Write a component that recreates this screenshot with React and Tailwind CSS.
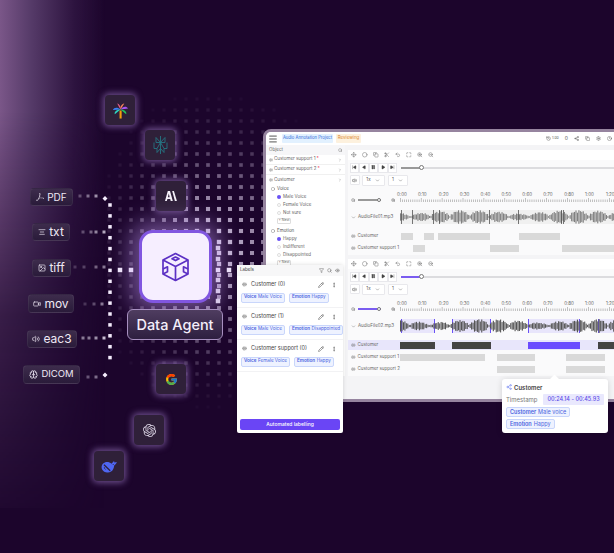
import React from 'react';
import {
  Menu, Search, Clock, Share2, Settings, Eye, Filter, ChevronDown, ChevronRight,
  SkipBack, SkipForward, Play, Pause, StepBack, Volume2, ZoomIn, ZoomOut,
  Copy, Scissors, Undo2, Maximize, Pencil, MoreVertical, AudioLines,
  Video, Image, AlignCenter, Brain, Move, Circle, History,
} from 'lucide-react';
import { FcGoogle } from 'react-icons/fc';
import { SiOpenai, SiAdobeacrobatreader } from 'react-icons/si';

const font = { fontFamily: 'Inter, "Liberation Sans", sans-serif' };

// dotted backdrop behind the agent card
function DotField() {
  const dots = [];
  for (let i = 9; i < 30; i++) {
    for (let j = 8; j < 39; j++) {
      const x = 10 + i * 11;
      const y = j * 11;
      const dx = x < 205 ? (x - 205) / 0.72 : x - 205;
      const d = Math.hypot(dx, y - 250);
      const o = Math.pow(Math.max(0, 1 - d / 175), 1.6) * 1.05;
      if (o < 0.025) continue;
      const s = 3.200 + Math.min(o, 1) * 1.300;
      dots.push(<rect key={`${i}-${j}`} x={x - s / 2} y={y - s / 2} width={s} height={s} fill="#e9dcf6" opacity={Math.min(o, 0.9)} />);
    }
  }
  return (
    <svg className="absolute left-0 top-0" width="614" height="553">
      {dots}
    </svg>
  );
}

// white connector dots from the file chips into the card
function Connectors() {
  const dots = [];
  for (let y = 205; y <= 368; y += 10.9) dots.push([110, y, 3.500, 1]);
  [[80, 196, 0.3], [88, 196, 0.45], [96, 196, 0.6],
   [83, 232, 0.3], [91, 232, 0.4], [96, 232, 0.55], [104, 232, 0.7],
   [75, 267, 0.2], [84, 267, 0.25], [96, 267, 0.4], [104, 267, 0.5],
   [85, 304, 0.2], [94, 304, 0.3], [102, 304, 0.5],
   [83, 338, 0.5], [89, 338, 0.5], [96, 338, 0.6], [104, 338, 0.8],
   [88, 377, 0.35], [96, 377, 0.45]].forEach(([x, y, o]) => dots.push([x, y, 3, o]));
  [[120, 270], [131, 270], [218, 270], [229, 270]].forEach(([x, y]) => dots.push([x, y, 4.500, 1]));
  [248, 259, 280, 291, 301].forEach((y) => dots.push([218, y, 4.500, 0.9]));
  return (
    <svg className="absolute left-0 top-0" width="614" height="553">
      {dots.map(([x, y, s, o], i) => (
        <rect key={i} x={x - s / 2} y={y - s / 2} width={s} height={s} fill="#f4ecfc" opacity={o} />
      ))}
      <path d="M102.500 198.500l2.500-2.500 2.500 2.500-2.500 2.500zM102.500 375l2.500-2.500 2.500 2.500-2.500 2.500z" fill="#f4ecfc" />
    </svg>
  );
}

function Chip({ className, icon, label, text = 'text-[12px]' }) {
  return (
    <div className={`absolute flex items-center justify-center gap-[3px] rounded-[4px] border border-white/5 bg-gradient-to-b from-[#3d2c4c] to-[#2a1b3a] text-[#efe9f5] ${text} ${className}`}>
      {icon}
      <span>{label}</span>
    </div>
  );
}

function Tile({ className, children }) {
  return (
    <div className={`absolute flex h-[30px] w-[30px] items-center justify-center rounded-[4px] bg-[#2f2039] shadow-[0_0_6px_2px_rgba(160,125,200,0.6)] ${className}`}>
      {children}
    </div>
  );
}

function PalmLogo() {
  return (
    <svg width="17" height="17" viewBox="0 0 18 18">
      <rect x="8" y="9" width="2.200" height="8.500" fill="#f59e0b" />
      <path d="M9 8L1 8.500C2 5.500 6 5 9 8z" fill="#3b82f6" />
      <path d="M9 8L3 13C2 10.500 5 8 9 8z" fill="#2dd4bf" />
      <path d="M9 8L5.500 1.500C8 2 9.500 5 9 8z" fill="#ec5f8a" />
      <path d="M9 8L13 1.500C10 2 8.500 5 9 8z" fill="#f9845c" />
      <path d="M9 8L17 7C15 3.500 11 5 9 8z" fill="#a855f7" />
      <path d="M9 8L15 13C16 10.500 13 8 9 8z" fill="#22c55e" />
    </svg>
  );
}

function PerplexityLogo() {
  return (
    <svg width="15" height="18" viewBox="0 0 15 18" fill="none" stroke="#267582" strokeWidth="0.9">
      <path d="M7.500 0v18M7.500 6.500L3 1.500v5h9v-5zM1 6.500v6h3l3.500-6 3.500 6h3v-6M4 12.500v4l3.500-4 3.500 4v-4" />
    </svg>
  );
}

function AnthropicLogo() {
  return (
    <svg width="12" height="10" viewBox="0 0 12 10" fill="#f6f2fa">
      <path d="M2.800 0h2.200l2.800 10H5.700L5.200 8H2.400L1.800 10H0zM2.900 6.300h1.800L3.800 2.600z" />
      <path d="M7.200 0h1.700l3 10H9.900z" />
    </svg>
  );
}

function DeepseekLogo() {
  return (
    <svg width="16" height="14" viewBox="0 0 16 14">
      <path fill="#4f66f2" d="M6 3c1.800 0 3.300.6 4.500 1.700L13 2l.5 1.500L15.800 3c-.5 1.700-1.400 2.800-2.600 3.400C13 9.500 11.700 11.500 10 12.600 8.800 13.400 7.500 13.700 6 13.500 3 13.200.6 11 .6 8.200.6 5.300 3 3 6 3z" />
      <path d="M3 5.800L9.200 11.800" stroke="#2f2039" strokeWidth="1.200" fill="none" />
      <path d="M4.500 10.500c-.8-.6-1.200-1.400-1.200-2.300" stroke="#2f2039" strokeWidth=".8" fill="none" />
      <circle cx="12.200" cy="5.600" r=".5" fill="#2f2039" />
    </svg>
  );
}

function CubeIcon() {
  return (
    <svg width="29" height="30" viewBox="0 0 29 30" fill="none" stroke="#5c30c4" strokeWidth="1.700" strokeLinejoin="round">
      <path d="M14.500 1.500L27 8V22L14.500 28.500 2 22V8z" />
      <path d="M2 8L14.500 14.500 27 8M14.500 14.500V28.500" />
      <path d="M14.500 5l3.500 1.800-3.500 1.800-3.500-1.800z" />
      <path d="M2 22l4.500-2.200v-5L2 17M27 22l-4.500-2.200v-5L27 17" />
    </svg>
  );
}

// pseudo waveform, same shape on every render
function Wave({ h = 14, color = '#7d7d7d', seed = 1, lines = [] }) {
  const bars = [];
  for (let i = 0; i < 150; i++) {
    const t = i + seed * 7;
    const env = Math.pow(Math.abs(Math.sin(t * 0.23)), 0.6) * (0.45 + 0.55 * Math.abs(Math.cos(t * 0.041 + seed)));
    const a = Math.max(0.1, env * (0.6 + 0.4 * Math.abs(Math.sin(t * 1.9))));
    bars.push(<rect key={i} x={i * 1.450} y={h / 2 - (a * h) / 2} width="1.100" height={a * h} fill={color} />);
  }
  return (
    <svg className="absolute left-0 top-0" width="214" height={h}>
      {bars}
      {lines.map((x) => <rect key={x} x={x} y="0" width=".8" height={h} fill="#555" />)}
    </svg>
  );
}

function ToolRow() {
  const icons = [Move, Circle, Copy, Scissors, Undo2, Maximize, ZoomIn, ZoomOut];
  return (
    <div className="flex h-[10px] items-center gap-[5.500px] bg-white pl-[3px]">
      {icons.map((I, i) => <I key={i} size={5.500} strokeWidth={1.800} className="text-[#555]" />)}
    </div>
  );
}

function Transport({ accent }) {
  const icons = [SkipBack, StepBack, Pause, Play, SkipForward];
  return (
    <div className="flex h-[13px] items-center">
      <div className="flex">
        {icons.map((I, i) => (
          <div key={i} className="flex h-[10px] w-[9.600px] items-center justify-center border border-[#e8e8ec] bg-white">
            <I size={4.500} className="fill-[#444] text-[#444]" />
          </div>
        ))}
      </div>
      <div className="relative ml-[4px] h-[2px] flex-1 bg-[#dcdcdf]">
        <div className={`h-full w-[20px] ${accent}`} />
        <div className="absolute left-[18px] top-[-1.500px] h-[5px] w-[5px] rounded-full border border-[#777] bg-white" />
      </div>
    </div>
  );
}

function Speed() {
  return (
    <div className="flex h-[12px] items-center text-[4.500px] text-[#555]">
      <div className="flex h-[10px] w-[10px] items-center justify-center rounded-[1px] border border-[#e8e8ec] bg-white">
        <Volume2 size={5} className="text-[#333]" />
      </div>
      <div className="ml-[2px] flex h-[11px] w-[23px] items-center justify-center gap-[4px] rounded-[1px] border border-[#e8e8ec] bg-white">1x <ChevronDown size={5} /></div>
      <div className="ml-[3px] flex h-[11px] w-[20px] items-center justify-center gap-[4px] rounded-[1px] border border-[#e8e8ec] bg-white">1 <ChevronDown size={5} /></div>
    </div>
  );
}

function Ruler() {
  const labels = ['0:00', '0:10', '0:20', '0:30', '0:40', '0:50', '0:60', '0:70', '0:80', '1:00', '1:20'];
  const ticks = [];
  for (let i = 0; i < 110; i++) {
    ticks.push(<rect key={i} x={i * 2.090} y={i % 10 === 0 ? 0 : 1.500} width=".6" height={i % 10 === 0 ? 4 : 2.500} fill="#999" />);
  }
  return (
    <div className="h-[12px] flex-1">
      <div className="-ml-[3px] flex text-[4.500px] leading-[7px] text-[#666]">
        {labels.map((l) => <span key={l} className="w-[20.900px] shrink-0">{l}</span>)}
      </div>
      <svg width="214" height="5" className="block">{ticks}</svg>
    </div>
  );
}

function Track({ label, segs, bg = '' }) {
  return (
    <div className={`flex h-[10px] items-center text-[4.500px] text-[#666] ${bg}`}>
      <div className="flex w-[52px] shrink-0 items-center gap-[2px] pl-[3px]">
        <AudioLines size={4.500} />
        <span className="whitespace-nowrap">{label}</span>
      </div>
      <div className="flex flex-1">
        {segs.map(([gap, w, c], i) => (
          <div key={i} className="h-[7px] shrink-0" style={{ marginLeft: gap, width: w, background: c || '#d9d9d9' }} />
        ))}
      </div>
    </div>
  );
}

function AudioPanel({ file, seed, accent, sliderBar, waveBg, waveColor, highlight, lines, tracks }) {
  return (
    <div className="flex flex-col bg-[#fafafb]">
      <ToolRow />
      <div className="pl-[1.500px] pt-[1px]">
        <Transport accent={accent} />
        <Speed />
      </div>
      <div className="mt-[5px] flex h-[12px] items-end">
        <div className="flex w-[52px] shrink-0 items-center gap-[2px] pb-[1px] pl-[3px] text-[#555]">
          <ZoomOut size={4.500} />
          <div className={`relative h-[1.500px] w-[23px] ${sliderBar}`}>
            <div className="absolute right-0 top-[-1.500px] h-[4px] w-[4px] rounded-full border border-[#777] bg-white" />
          </div>
          <ZoomIn size={4.500} className="ml-[8px]" />
        </div>
        <Ruler />
      </div>
      <div className="mt-[7px] flex h-[14px] items-center text-[4.500px] text-[#666]">
        <div className="flex w-[52px] shrink-0 items-center gap-[2px] pl-[3px]">
          <ChevronDown size={5} />
          <span>{file}</span>
        </div>
        <div className={`relative h-[14px] flex-1 overflow-hidden ${waveBg}`}>
          <div className="flex h-full">
            {highlight.map(([gap, w], i) => (
              <div key={i} className="h-full shrink-0 border-x border-[#6a52f5] bg-[#e8e5fb]" style={{ marginLeft: gap, width: w }} />
            ))}
          </div>
          <Wave seed={seed} color={waveColor} lines={lines} />
        </div>
      </div>
      <div className="mt-[7px] flex flex-col gap-[2px] pb-[2px]">
        {tracks.map((t) => <Track key={t.label} {...t} />)}
      </div>
    </div>
  );
}

function OptionGroup({ title, options }) {
  return (
    <div className="pb-[3px] pl-[5px]">
      <div className="flex h-[8px] items-center gap-[2px] text-[#555]"><Circle size={4} /> {title}</div>
      {options.map((o, i) => (
        <div key={o} className="flex h-[8px] items-center gap-[2px] pl-[6px]">
          <span className={`h-[4px] w-[4px] rounded-full ${i === 0 ? 'bg-[#6a52f5]' : 'border border-[#dedede]'}`} />
          {o}
        </div>
      ))}
      <div className="ml-[6px] mt-[1px] flex h-[6px] w-[14px] items-center justify-center rounded-[1px] border border-[#ddd] text-[3.500px]">+ Next</div>
    </div>
  );
}

function Sidebar() {
  return (
    <div className="w-[79px] shrink-0 bg-white text-[4.500px] text-[#666]">
      <div className="flex h-[10px] items-center justify-between bg-[#f6f6f8] px-[3px]">
        <span>Object</span>
        <Search size={4.500} />
      </div>
      {['Customer support 1', 'Customer support 2'].map((s) => (
        <div key={s} className="flex h-[10px] items-center justify-between border-b border-[#f0f0f0] px-[3px]">
          <span className="flex items-center gap-[1px]"><AudioLines size={4} />{s} <span className="text-[#e23]">*</span></span>
          <ChevronRight size={4} />
        </div>
      ))}
      <div className="flex h-[10px] items-center justify-between px-[3px]">
        <span className="flex items-center gap-[1px]"><AudioLines size={4} />Customer</span>
        <ChevronRight size={4} />
      </div>
      <OptionGroup title="Voice" options={['Male Voice', 'Female Voice', 'Not sure']} />
      <OptionGroup title="Emotion" options={['Happy', 'Indifferent', 'Disappointed']} />
    </div>
  );
}

function AppWindow() {
  return (
    <div className="absolute left-[263px] top-[129px] h-[273px] w-[354px] rounded-tl-[8px] border-[3px] border-[#96849f] bg-[#f4f4f6]" style={font}>
      <div className="flex h-[13px] items-center rounded-tl-[5px] bg-white pl-[2px]">
        <Menu size={10} className="text-[#333]" />
        <span className="ml-[4px] flex h-[9px] w-[51px] items-center justify-center whitespace-nowrap rounded-[1px] bg-[#e2f1ff] text-[4.200px] text-[#2f6bd8]">Audio Annotation Project</span>
        <span className="ml-[3px] flex h-[9px] w-[25px] items-center justify-center rounded-[1px] bg-[#fdf1de] text-[4.500px] text-[#e08a2e]">Reviewing</span>
        <div className="ml-auto flex items-center gap-[6px] pr-[2px] text-[#555]">
          <span className="flex items-center gap-[1px]"><History size={5} /><span className="text-[3.500px]">1:00</span></span>
          <span className="text-[5px]">0</span>
          <Share2 size={5} />
          <Copy size={5} />
          <Settings size={5} />
          <Clock size={5} />
        </div>
      </div>
      <div className="flex">
        <Sidebar />
        <div className="ml-[3px] mt-[5px] flex flex-1 flex-col gap-[4px]">
          <AudioPanel
            file="AudioFile01.mp3" seed={1} accent="bg-[#999]" sliderBar="bg-[#999]"
            waveBg="bg-[#f0f0f0]" waveColor="#808080" highlight={[]} lines={[1, 12, 33, 39, 89, 118, 161, 163]}
            tracks={[
              { label: 'Customer', segs: [[1, 12], [11, 10], [4, 52], [29, 41]] },
              { label: 'Customer support 1', segs: [[13, 12], [65, 29], [43, 60]] },
            ]}
          />
          <AudioPanel
            file="AudioFile02.mp3" seed={3} accent="bg-[#7a5cf0]" sliderBar="bg-[#7a5cf0]"
            waveBg="bg-[#fafafb]" waveColor="#555" highlight={[[1, 34], [17, 39], [37, 52], [18, 30]]} lines={[]}
            tracks={[
              { label: 'Customer', bg: 'bg-[#e8e6fb]', segs: [[0, 35, '#444'], [17, 39, '#444'], [37, 52, '#6a4bff'], [18, 30, '#444']] },
              { label: 'Customer support 1', segs: [[0, 85], [12, 38], [31, 39]] },
              { label: 'Customer support 2', segs: [[97, 38], [31, 39]] },
            ]}
          />
        </div>
      </div>
    </div>
  );
}

function LabelTag({ k, v }) {
  return (
    <span className="flex h-[10px] items-center gap-[1.500px] whitespace-nowrap rounded-[2px] border border-[#c9d6fb] bg-[#eef2ff] px-[2px] text-[4.600px] text-[#4a63e0]">
      <b className="font-semibold">{k}</b> {v}
    </span>
  );
}

function LabelsPanel() {
  const rows = [
    ['Customer (0)', 'Male Voice', 'Happy'],
    ['Customer (1)', 'Male Voice', 'Disappointed'],
    ['Customer support (0)', 'Female Voice', 'Happy'],
  ];
  return (
    <div className="absolute left-[237px] top-[265px] flex h-[168px] w-[106px] flex-col rounded-[2px] bg-white shadow-[0_0_4px_rgba(0,0,0,0.15)]" style={font}>
      <div className="flex h-[11px] items-center justify-between bg-[#f7f7f8] px-[3px] text-[4.500px] text-[#333]">
        <span>Labels</span>
        <span className="flex gap-[3px] text-[#555]"><Filter size={5} /><Search size={5} /><Eye size={5} /></span>
      </div>
      <div className="flex flex-1 flex-col">
        {rows.map(([name, voice, emotion]) => (
          <div key={name} className="flex h-[32px] flex-col justify-center gap-[4px] border-b border-[#f2f2f4] px-[4px]">
            <div className="flex items-center justify-between pr-[2px] text-[5.500px] text-[#444]">
              <span className="flex items-center gap-[4px] pl-[1px]"><AudioLines size={5} />{name}</span>
              <span className="flex gap-[7px]"><Pencil size={6} /><MoreVertical size={6} /></span>
            </div>
            <div className="flex gap-[4px]"><LabelTag k="Voice" v={voice} /><LabelTag k="Emotion" v={emotion} /></div>
          </div>
        ))}
      </div>
      <div className="mx-[3px] mb-[3px] flex h-[11px] items-center justify-center rounded-[2px] bg-[#6a45f5] text-[5px] font-medium text-white">Automated labelling</div>
    </div>
  );
}

function SegmentTip() {
  return (
    <div className="absolute left-[502px] top-[379px] flex h-[54px] w-[106px] flex-col gap-[2px] rounded-[3px] bg-white px-[4px] pt-[3px] shadow-[0_1px_6px_rgba(0,0,0,0.15)]" style={font}>
      <div className="absolute left-[49px] top-[-3px] h-[7px] w-[7px] rotate-45 bg-white" />
      <div className="flex h-[10px] items-center gap-[2px] text-[6px] font-semibold text-[#444]"><Share2 size={6} className="text-[#6a7ff0]" />Customer</div>
      <div className="flex items-center justify-between text-[6px] text-[#777]">
        <span>Timestamp</span>
        <span className="flex h-[11px] w-[61px] items-center justify-center whitespace-nowrap rounded-[1px] bg-[#e9e8fd] text-[5.500px] font-medium text-[#5b4be8]">00:24.14 - 00:45.93</span>
      </div>
      <div className="flex"><span className="flex h-[10px] items-center gap-[2px] rounded-[2px] border border-[#c9d6fb] bg-[#eef2ff] px-[3px] text-[5.500px] text-[#4a63e0]"><b className="font-semibold">Customer</b> Male voice</span></div>
      <div className="flex"><span className="flex h-[10px] items-center gap-[2px] rounded-[2px] border border-[#c9d6fb] bg-[#eef2ff] px-[3px] text-[5.500px] text-[#4a63e0]"><b className="font-semibold">Emotion</b> Happy</span></div>
    </div>
  );
}

export default function App() {
  return (
    <div className="relative h-[553px] w-[614px] overflow-hidden bg-[#1c052c]" style={font}>
      <div className="absolute left-0 top-0 h-[508px] w-[105px] bg-[linear-gradient(to_right,#7a5688,#553a68_30%,#2e1440_70%,transparent)] [mask-image:linear-gradient(to_bottom,black_0%,black_22%,rgba(0,0,0,0.3)_62%,rgba(0,0,0,0.05)_100%)]" />
      <DotField />
      <Connectors />

      <Chip className="left-[30px] top-[188px] h-[18px] w-[43px]" icon={<SiAdobeacrobatreader size={8} />} label="PDF" text="text-[10px]" />
      <Chip className="left-[32px] top-[223px] h-[18px] w-[38px]" icon={<AlignCenter size={8} />} label="txt" />
      <Chip className="left-[32px] top-[259px] h-[18px] w-[39px]" icon={<Image size={8} />} label="tiff" />
      <Chip className="left-[28px] top-[294px] h-[19px] w-[46px]" icon={<Video size={8} />} label="mov" />
      <Chip className="left-[27px] top-[330px] h-[18px] w-[50px]" icon={<Volume2 size={8} />} label="eac3" />
      <Chip className="left-[23px] top-[365px] h-[19px] w-[57px]" icon={<Brain size={9} />} label="DICOM" text="text-[9.500px]" />

      <Tile className="left-[105px] top-[95px]"><PalmLogo /></Tile>
      <Tile className="left-[145px] top-[130px]"><PerplexityLogo /></Tile>
      <Tile className="left-[156px] top-[181px]"><AnthropicLogo /></Tile>
      <Tile className="left-[156px] top-[364px]"><FcGoogle size={13} /></Tile>
      <Tile className="left-[134px] top-[415px]"><SiOpenai size={13} className="text-[#d9d2e2]" /></Tile>
      <Tile className="left-[94px] top-[451px]"><DeepseekLogo /></Tile>

      <div className="absolute left-[139px] top-[230px] flex h-[73px] w-[73px] items-center justify-center rounded-[14px] border-[3px] border-[#8156e0] bg-[#f6eeff] shadow-[0_0_22px_9px_rgba(190,150,240,0.5)]">
        <CubeIcon />
      </div>
      <div className="absolute left-[127px] top-[309px] flex h-[31px] w-[96px] items-center justify-center rounded-[6px] border border-[#a78fc0] bg-gradient-to-b from-[#4f3d60] to-[#2e1f40] text-[14.500px] font-medium text-[#f4eefa]">
        Data Agent
      </div>

      <AppWindow />
      <LabelsPanel />
      <SegmentTip />
    </div>
  );
}
